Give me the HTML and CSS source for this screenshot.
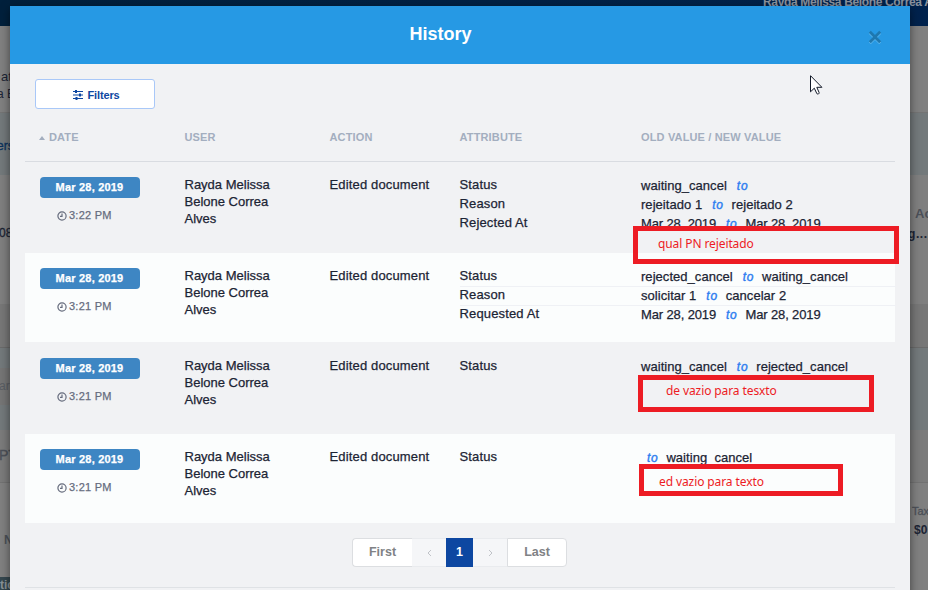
FILE: index.html
```
<!DOCTYPE html>
<html lang="en">
<head>
<meta charset="utf-8">
<title>History</title>
<link rel="stylesheet" href="styles.css">
</head>
<body>
<div class="page">
  <header class="topbar"><span>Rayda Melissa Belone Correa A</span></header>
  <div class="behind">
    <div class="side left">
      <div class="band b1"><p class="t1">at</p><p class="t2">a B</p></div>
      <div class="band b2"><p class="link">ers</p></div>
      <div class="band b3"><p>08</p></div>
      <div class="band b4"></div>
      <div class="band b5"></div>
      <div class="band b5g"><p class="muted">ar</p></div>
      <div class="band b6"></div>
      <div class="band b7"><p class="muted big">PT</p></div>
      <div class="band b8"><p class="muted">N</p></div>
      <div class="band b9"><p>tic</p></div>
    </div>
    <div class="side right">
      <div class="band b1"></div>
      <div class="band b2"></div>
      <div class="band b3"><p class="ac">Ac</p><p class="dots">g....</p></div>
      <div class="band b4"></div>
      <div class="band b5r"></div>
      <div class="band b7"></div>
      <div class="band b8r"><p class="tax">Tax</p><p class="zero">$0</p></div>
    </div>
  </div>
</div>

<main class="modal">
  <div class="modal-head">
    <h1>History</h1>
    <svg class="close" viewBox="0 0 14 14"><path d="M1.8 2.8 12.2 13.2M12.2 2.8 1.8 13.2" stroke="#5db8f0" stroke-width="2.8"/><path d="M1.8 1.8 12.2 12.2M12.2 1.8 1.8 12.2" stroke="#1e78b0" stroke-width="2.8"/></svg>
  </div>
  <div class="content">
    <button class="filters"><svg viewBox="0 0 10 10"><path d="M0 1.5h10M0 5h10M0 8.5h10" stroke="#0d47a1"/><path d="M3 0v3M7 3.5v3M3.5 7v3" stroke="#0d47a1" stroke-width="2"/></svg>Filters</button>
    <div class="row thead">
      <div class="date-h"><i class="caret"></i>DATE</div><div>USER</div><div>ACTION</div><div>ATTRIBUTE</div><div>OLD VALUE / NEW VALUE</div>
    </div>

    <div class="row r1">
      <div class="date"><b>Mar 28, 2019</b><span><svg viewBox="0 0 10 10"><circle cx="5" cy="5" r="4.1"/><path d="M5 2.6V5.4H3"/></svg>3:22 PM</span></div>
      <div class="user">Rayda Melissa<br>Belone Correa<br>Alves</div>
      <div class="action">Edited document</div>
      <div class="changes">
        <div class="change"><span>Status</span><span class="v">waiting_cancel<em>to</em></span></div>
        <div class="change"><span>Reason</span><span class="v">rejeitado 1<em>to</em>rejeitado 2</span></div>
        <div class="change"><span>Rejected At</span><span class="v day">Mar 28, 2019<em>to</em>Mar 28, 2019</span></div>
      </div>
    </div>
    <div class="row r2">
      <div class="date"><b>Mar 28, 2019</b><span><svg viewBox="0 0 10 10"><circle cx="5" cy="5" r="4.1"/><path d="M5 2.6V5.4H3"/></svg>3:21 PM</span></div>
      <div class="user">Rayda Melissa<br>Belone Correa<br>Alves</div>
      <div class="action">Edited document</div>
      <div class="changes">
        <div class="change"><span>Status</span><span class="v">rejected_cancel<em>to</em>waiting_cancel</span></div>
        <div class="change"><span>Reason</span><span class="v">solicitar 1<em>to</em>cancelar 2</span></div>
        <div class="change"><span>Requested At</span><span class="v day">Mar 28, 2019<em>to</em>Mar 28, 2019</span></div>
      </div>
    </div>
    <div class="row r3">
      <div class="date"><b>Mar 28, 2019</b><span><svg viewBox="0 0 10 10"><circle cx="5" cy="5" r="4.1"/><path d="M5 2.6V5.4H3"/></svg>3:21 PM</span></div>
      <div class="user">Rayda Melissa<br>Belone Correa<br>Alves</div>
      <div class="action">Edited document</div>
      <div class="changes">
        <div class="change"><span>Status</span><span class="v">waiting_cancel<em>to</em>rejected_cancel</span></div>
      </div>
    </div>
    <div class="row r4">
      <div class="date"><b>Mar 28, 2019</b><span><svg viewBox="0 0 10 10"><circle cx="5" cy="5" r="4.1"/><path d="M5 2.6V5.4H3"/></svg>3:21 PM</span></div>
      <div class="user">Rayda Melissa<br>Belone Correa<br>Alves</div>
      <div class="action">Edited document</div>
      <div class="changes">
        <div class="change"><span>Status</span><span class="v"><em class="lead">to</em>waiting_cancel</span></div>
      </div>
    </div>

    <nav class="pager">
      <a class="first">First</a><a class="off"><svg viewBox="0 0 5 8"><path d="M4 1 1 4l3 3"/></svg></a><a class="on">1</a><a class="off"><svg viewBox="0 0 5 8"><path d="M1 1l3 3-3 3"/></svg></a><a class="last">Last</a>
    </nav>
  </div>
</main>

<div class="note n1">qual PN rejeitado</div>
<div class="note n2">de vazio para tesxto</div>
<div class="note n3">ed vazio para texto</div>
<svg class="cursor" viewBox="0 0 13 20"><path d="M.5.7v16.1l3.8-3.6 2.6 5.5c1 .8 2.7 0 2.2-1.2L6.8 12.3h5.1z" fill="#fff" stroke="#111827"/></svg>
</body>
</html>
```
FILE: styles.css
```
* { box-sizing: border-box; }
body {
  margin: 0;
  width: 928px;
  height: 590px;
  overflow: hidden;
  position: relative;
  font-family: "Liberation Sans", Arial, sans-serif;
  font-size: 13px;
  line-height: 17px;
  color: #1c2434;
}
p, h1 { margin: 0; }
svg { display: block; fill: none; }

/* dimmed page behind the dialog */
.page { height: 590px; overflow: hidden; background: #808080; }
.topbar {
  height: 26px;
  background: linear-gradient(90deg, #00203c, #00224d);
  color: #8b929d;
  font-size: 12px;
  font-weight: bold;
  line-height: 14px;
  letter-spacing: -.35px;
  padding-left: 763px;
  white-space: nowrap;
  overflow: hidden;
}
.topbar span { display: block; margin-top: -5px; }
.behind { display: flex; justify-content: space-between; }
.side { width: 18px; overflow: hidden; white-space: nowrap; }
.band { overflow: hidden; }
.band p { line-height: 14px; font-size: 12px; }
.b1 { height: 87px; background: #808080; border-bottom: 1px solid #747474; }
.b2 { height: 62px; background: #73797b; }
.b3 { height: 130px; background: #7f7f7f; border-bottom: 1px solid #777; }
.b4 { height: 43px; background: #777; border-bottom: 1px solid #6a6a6a; }
.b5 { height: 20px; background: #73797b; }
.b5g { height: 37px; background: #757575; }
.b6 { height: 25px; background: #73797b; }
.b5r { height: 82px; background: #73797b; }
.b7 { height: 53px; background: #7b7b7b; border-bottom: 1px solid #727272; }
.b8 { height: 94px; background: #808080; }
.b8r { height: 107px; background: #808080; }
.b9 { height: 13px; background: #35474f; color: #8a9296; }
.left .t1 { padding: 44px 0 0 1px; font-size: 13px; }
.left .t2 { padding-top: 3px; text-indent: -3px; }
.left .link { padding-top: 26px; text-indent: -3px; color: #0b315c; -webkit-text-stroke: .3px currentColor; }
.left .b3 p { padding-top: 51px; text-indent: -1px; -webkit-text-stroke: .3px currentColor; }
.muted { color: #4c5058; }
.b5g .muted { padding-top: 11px; text-indent: -1px; color: #5a5d63; }
.left .big { padding-top: 18px; text-indent: -1px; font-size: 14px; -webkit-text-stroke: .4px currentColor; }
.b8 .muted { padding: 50px 0 0 4px; font-weight: bold; }
.b9 p { padding-top: 1px; font-weight: bold; }
.right .ac { padding: 32px 0 0 5px; font-size: 13px; font-weight: bold; color: #4c5058; }
.right .dots { padding-top: 6px; font-weight: bold; text-indent: -2px; letter-spacing: .6px; }
.right .tax { padding: 21px 0 0 2px; color: #4c5058; font-size: 11px; -webkit-text-stroke: .3px currentColor; }
.right .zero { padding: 5px 0 0 4px; font-weight: bold; }

.modal {
  position: absolute;
  left: 10px;
  top: 6px;
  width: 900px;
  height: 600px;
  background: #f1f2f4;
  box-shadow: 0 3px 9px rgba(0, 0, 0, .5);
}
.modal-head {
  height: 58px;
  background: #2699e4;
  display: flex;
  justify-content: flex-end;
  align-items: center;
  padding-right: 28px;
}
.modal-head h1 {
  flex: 1;
  padding: 0 0 2px 3px;
  text-align: center;
  font-size: 18px;
  line-height: 22px;
  color: #fff;
}
.close { width: 14px; height: 14px; margin-top: 4px; }
.content { height: 525px; padding: 15px 15px 0; }
.content::after { content: ""; display: block; margin-top: 20px; border-top: 1px solid #dfe2e5; }
.filters {
  display: flex;
  align-items: center;
  justify-content: center;
  gap: 5px;
  width: 120px;
  height: 30px;
  margin-left: 10px;
  padding: 2px 0 0 2px;
  border: 1px solid #a9c8f8;
  border-radius: 3px;
  background: #fff;
  color: #0d47a1;
  font: bold 11px "Liberation Sans", Arial, sans-serif;
  letter-spacing: -.15px;
}
.filters svg { width: 10px; height: 10px; }

.row {
  display: grid;
  grid-template-columns: 144.5px 145px 130px 436px;
  padding-left: 15px;
  -webkit-text-stroke: .25px currentColor;
  letter-spacing: .15px;
}
.thead {
  grid-template-columns: 144.5px 145px 130px 181.5px 1fr;
  height: 53px;
  padding-top: 20px;
  border-bottom: 1px solid #d9dce1;
  color: #a3aebf;
  font-size: 11px;
  font-weight: bold;
  -webkit-text-stroke: 0;
  letter-spacing: .15px;
}
.date-h { display: flex; align-items: center; height: 17px; gap: 3px; margin-left: -1px; }
.caret { border: 3.5px solid transparent; border-top: 0; border-bottom: 4px solid #a3aebf; margin-right: 1px; }
.r1 { height: 91px; padding-top: 14px; }
.r2 { height: 89px; padding-top: 14px; background: #fbfdfd; }
.r3 { height: 92px; padding-top: 15px; }
.r4 { height: 89px; padding-top: 14px; background: #fbfdfd; }
.user { letter-spacing: 0; }
.date { padding-top: 1px; }
.date b {
  display: block;
  width: 100px;
  height: 21px;
  padding-right: 1px;
  border-radius: 4px;
  background: #3e86c3;
  color: #fff;
  font-size: 11px;
  line-height: 21px;
  letter-spacing: .2px;
  text-align: center;
}
.date span {
  display: flex;
  align-items: center;
  gap: 2px;
  margin: 9px 0 0 17px;
  font-size: 11px;
  letter-spacing: .25px;
  color: #666c7d;
}
.date svg { width: 10px; height: 10px; stroke: currentColor; stroke-width: 1.2; }
.change { display: grid; grid-template-columns: 181.5px 1fr; height: 19px; }
.r2 .change + .change { box-shadow: inset 0 1px #eff1f5; }
.v { padding-top: 1px; white-space: nowrap; letter-spacing: .04px; }
.v.day { letter-spacing: -.13px; }
.v em { margin: 0 8px 0 10px; color: #2b7cf0; font-size: 12px; letter-spacing: .7px; -webkit-text-stroke: .4px currentColor; }
.v em.lead { margin-left: 6px; }

.pager { display: flex; width: 215px; height: 29px; margin: 15px 0 0 327px; line-height: 26px; font-size: 12.5px; font-weight: bold; color: #808285; text-align: center; }
.pager a { border: 1px solid #dcdee1; background: #fff; }
.pager .first { width: 60px; border-right: 0; border-radius: 4px 0 0 4px; }
.pager .last { width: 60px; border-radius: 0 4px 4px 0; }
.pager .off { width: 34px; border-color: #e9ebee; border-left: 0; border-right: 0; background: #f5f6f8; display: flex; align-items: center; justify-content: center; }
.pager .on { width: 27px; background: #0d47a1; border-color: #0d47a1; color: #fff; }
.pager svg { width: 5px; height: 8px; stroke: #c0c3c8; }

/* markup boxes drawn over the dialog */
.note {
  position: absolute;
  border: 5px solid #ed1c24;
  color: #ed1c24;
  font-family: "Noto Sans", "Open Sans", sans-serif;
  font-size: 12px;
  line-height: 16px;
  letter-spacing: -.1px;
  white-space: nowrap;
}
.n1 { left: 633px; top: 226px; width: 266px; height: 38px; padding: 5px 0 0 20px; }
.n2 { left: 638px; top: 375px; width: 236px; height: 37px; padding: 3px 0 0 23px; }
.n3 { left: 639px; top: 464px; width: 204px; height: 32px; padding: 5px 0 0 15px; }
.cursor { position: absolute; left: 810px; top: 75px; width: 13px; height: 20px; }
```
